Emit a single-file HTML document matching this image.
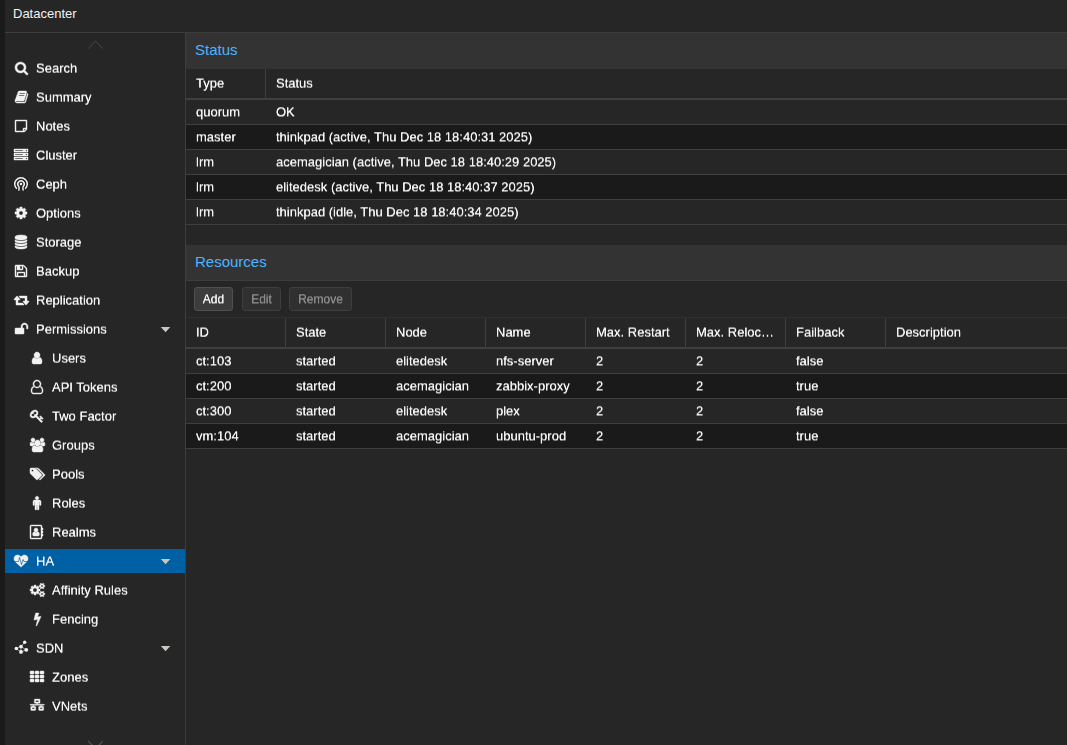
<!DOCTYPE html>
<html><head><meta charset="utf-8"><title>Datacenter</title>
<style>
html,body{margin:0;padding:0}
body{width:1067px;height:745px;overflow:hidden;background:#262626;color:#f2f2f2;font-family:"Liberation Sans",sans-serif;font-size:13px;position:relative}
div,span,svg,i{position:absolute;box-sizing:border-box}
.ic{overflow:visible}
.b0{filter:url(#vb0)}
.b1{filter:url(#vb1)}
#strip{left:0;top:0;width:5px;height:745px;background:#1a1a1a}
#hdr{left:5px;top:0;width:1062px;height:33px;border-bottom:1px solid #3d3d3d}
#hdr span{left:8px;top:0;line-height:27px;white-space:nowrap}
#side{left:0;top:0;width:186px;height:745px}
#sideb{left:185px;top:33px;width:1px;height:712px;background:#3d3d3d}
.lbl{line-height:29px;white-space:nowrap;font-size:13px}
.sel{left:5px;width:180px;height:24px;background:#0060a4}
.arr{left:161px;width:0;height:0;border-left:5px solid transparent;border-right:5px solid transparent;border-top:5px solid #d6cfc4}
.panelhdr{left:186px;width:881px;height:36px;background:#333333}
.panelhdr span{left:9px;top:0;line-height:34px;font-size:15px;color:#4db4ff;white-space:nowrap}
.colhdr{left:186px;width:881px;height:31px;border-bottom:2px solid #3f3f3f;background:#262626}
.colhdr span{top:0;line-height:29px;white-space:nowrap}
.colhdr i{top:0;width:1px;height:29px;background:#3f3f3f}
.grid{left:186px;width:881px}
.row{left:0;width:881px;height:25px;border-bottom:1px solid #3f3f3f}
.row.alt{background:#1a1a1a}
.cell{top:0;line-height:24px;white-space:nowrap}
.tb{left:186px;width:881px;height:36px}
.btn{top:6px;height:24px;border:1px solid #505050;border-radius:3px;background:#3c3c3c;font-size:12px;color:#f2f2f2}
.btn span{left:0;top:0;width:100%;line-height:22px;text-align:center}
.btn.dis{background:#303030;color:#8c8c8c;border-color:#3e3e3e}
</style></head><body>
<svg width="0" height="0" style="position:absolute"><defs>
<filter id="vb0" x="-5%" y="-20%" width="110%" height="140%" color-interpolation-filters="sRGB"><feConvolveMatrix order="1 2" kernelMatrix="0.4 0.6" targetX="0" targetY="0" edgeMode="none" preserveAlpha="false"/><feComponentTransfer><feFuncA type="linear" slope="1.35"/></feComponentTransfer></filter>
<filter id="vb1" x="-5%" y="-20%" width="110%" height="140%" color-interpolation-filters="sRGB"><feConvolveMatrix order="1 2" kernelMatrix="0.6 0.4" targetX="0" targetY="1" edgeMode="none" preserveAlpha="false"/><feComponentTransfer><feFuncA type="linear" slope="1.35"/></feComponentTransfer></filter>
</defs></svg>
<div id="strip"></div>
<div id="hdr"><span>Datacenter</span></div>
<div id="sideb"></div>
<div id="side">
<svg class="ic" style="left:86px;top:38px;width:20px;height:14px" viewBox="86 38 20 14"><path d="M88.2 48.6L95.5 41.1L102.8 48.6" fill="none" stroke="#3d3d3d" stroke-width="1.1"/></svg>
<svg class="ic" style="left:86px;top:738px;width:20px;height:14px" viewBox="86 738 20 14"><path d="M88.2 741.1L95.5 748.6L102.8 741.1" fill="none" stroke="#555555" stroke-width="1.1"/></svg>
<svg class="ic" style="left:14.50px;top:60.50px;width:13.00px;height:14.00px" viewBox="0 -1536 1664 1792"><path fill="#f2f2f2" stroke="#f2f2f2" stroke-width="56" stroke-linejoin="round" transform="scale(1,-1)" d="M1020 388Q1152 519 1152 704Q1152 889 1020 1020Q889 1152 704 1152Q519 1152 388 1020Q256 889 256 704Q256 519 388 388Q519 256 704 256Q889 256 1020 388ZM1664 -128Q1664 -180 1626 -218Q1588 -256 1536 -256Q1482 -256 1446 -218L1103 124Q924 0 704 0Q561 0 430 56Q300 111 206 206Q111 300 56 430Q0 561 0 704Q0 847 56 978Q111 1108 206 1202Q300 1297 430 1352Q561 1408 704 1408Q847 1408 978 1352Q1108 1297 1202 1202Q1297 1108 1352 978Q1408 847 1408 704Q1408 484 1284 305L1627 -38Q1664 -75 1664 -128Z"/></svg><div class="lbl b0" style="left:36px;top:54px">Search</div><svg class="ic" style="left:14.50px;top:89.50px;width:13.00px;height:14.00px" viewBox="0 -1536 1664 1792"><path fill="#f2f2f2" stroke="#f2f2f2" stroke-width="56" stroke-linejoin="round" transform="scale(1,-1)" d="M1639 1058Q1679 1001 1657 929L1382 23Q1363 -41 1306 -84Q1248 -128 1183 -128H260Q183 -128 112 -74Q40 -21 12 57Q-12 124 10 184Q10 188 13 211Q16 234 17 248Q18 256 14 270Q10 283 11 289Q13 300 19 310Q25 320 36 334Q46 347 52 357Q75 395 97 448Q119 502 127 540Q130 550 128 570Q125 590 127 598Q130 609 144 626Q158 643 161 649Q182 685 203 741Q224 797 228 831Q229 840 226 863Q222 886 226 891Q230 904 248 922Q266 939 270 944Q289 970 312 1028Q336 1087 340 1125Q341 1133 337 1150Q333 1168 335 1177Q337 1185 344 1195Q351 1205 362 1218Q373 1231 379 1239Q387 1251 396 1270Q404 1288 410 1304Q417 1321 426 1340Q436 1360 446 1372Q456 1385 472 1396Q489 1407 508 1408Q528 1408 556 1402L555 1399Q593 1408 606 1408H1367Q1441 1408 1481 1352Q1521 1296 1499 1222L1225 316Q1189 197 1154 162Q1118 128 1025 128H156Q129 128 118 113Q107 97 117 70Q141 0 261 0H1184Q1213 0 1240 16Q1267 31 1275 57L1575 1044Q1582 1066 1580 1101Q1618 1086 1639 1058ZM575 1056Q571 1043 577 1034Q583 1024 597 1024H1205Q1218 1024 1230 1034Q1243 1043 1247 1056L1268 1120Q1272 1133 1266 1142Q1260 1152 1246 1152H638Q625 1152 612 1142Q600 1133 596 1120ZM492 800Q488 787 494 778Q500 768 514 768H1122Q1135 768 1148 778Q1160 787 1164 800L1185 864Q1189 877 1183 886Q1177 896 1163 896H555Q542 896 530 886Q517 877 513 864Z"/></svg><div class="lbl b0" style="left:36px;top:83px">Summary</div><svg class="ic" style="left:15.00px;top:118.50px;width:12.00px;height:14.00px" viewBox="0 -1536 1536 1792"><path fill="#f2f2f2" stroke="#f2f2f2" stroke-width="56" stroke-linejoin="round" transform="scale(1,-1)" d="M1400 256H1152V8Q1181 18 1193 30L1378 215Q1390 227 1400 256ZM1120 384H1408V1280H128V0H1024V288Q1024 328 1052 356Q1080 384 1120 384ZM1536 1312V288Q1536 248 1516 200Q1496 152 1468 124L1284 -60Q1256 -88 1208 -108Q1160 -128 1120 -128H96Q56 -128 28 -100Q0 -72 0 -32V1312Q0 1352 28 1380Q56 1408 96 1408H1440Q1480 1408 1508 1380Q1536 1352 1536 1312Z"/></svg><div class="lbl b0" style="left:36px;top:112px">Notes</div><svg class="ic" style="left:14.00px;top:147.50px;width:14.00px;height:14.00px" viewBox="0 -1536 1792 1792"><path fill="#f2f2f2" stroke="#f2f2f2" stroke-width="56" stroke-linejoin="round" transform="scale(1,-1)" d="M128 128H1152V256H128ZM128 640H1152V768H128ZM1668 124Q1696 152 1696 192Q1696 232 1668 260Q1640 288 1600 288Q1560 288 1532 260Q1504 232 1504 192Q1504 152 1532 124Q1560 96 1600 96Q1640 96 1668 124ZM128 1152H1152V1280H128ZM1668 636Q1696 664 1696 704Q1696 744 1668 772Q1640 800 1600 800Q1560 800 1532 772Q1504 744 1504 704Q1504 664 1532 636Q1560 608 1600 608Q1640 608 1668 636ZM1668 1148Q1696 1176 1696 1216Q1696 1256 1668 1284Q1640 1312 1600 1312Q1560 1312 1532 1284Q1504 1256 1504 1216Q1504 1176 1532 1148Q1560 1120 1600 1120Q1640 1120 1668 1148ZM1792 384V0H0V384ZM1792 896V512H0V896ZM1792 1408V1024H0V1408Z"/></svg><div class="lbl b0" style="left:36px;top:141px">Cluster</div><svg class="ic" style="left:11.899999999999999px;top:174.9px;width:18px;height:18px" viewBox="-9 -9 18 18" fill="none" stroke="#f2f2f2" stroke-width="1.45" stroke-linecap="butt"><circle cx="0" cy="0.1" r="1.25" fill="#f2f2f2" stroke="none"/><path d="M-4.2 4.7A6.3 6.3 0 1 1 4.2 4.7"/><path d="M-2.3 6.6L-1.9 4.6Q-1.7 3.4 -2.4 2.2A3.2 3.2 0 1 1 2.4 2.2Q1.7 3.4 1.9 4.6L2.3 6.6"/></svg><div class="lbl b0" style="left:36px;top:170px">Ceph</div><svg class="ic" style="left:15.00px;top:205.50px;width:12.00px;height:14.00px" viewBox="0 -1536 1536 1792"><path fill="#f2f2f2" stroke="#f2f2f2" stroke-width="56" stroke-linejoin="round" transform="scale(1,-1)" d="M949 459Q1024 534 1024 640Q1024 746 949 821Q874 896 768 896Q662 896 587 821Q512 746 512 640Q512 534 587 459Q662 384 768 384Q874 384 949 459ZM1536 749V527Q1536 515 1528 504Q1520 493 1508 491L1323 463Q1304 409 1284 372Q1319 322 1391 234Q1401 222 1401 209Q1401 196 1392 186Q1365 149 1293 78Q1221 7 1199 7Q1187 7 1173 16L1035 124Q991 101 944 86Q928 -50 915 -100Q908 -128 879 -128H657Q643 -128 632 -120Q622 -111 621 -98L593 86Q544 102 503 123L362 16Q352 7 337 7Q323 7 312 18Q186 132 147 186Q140 196 140 209Q140 221 148 232Q163 253 199 298Q235 344 253 369Q226 419 212 468L29 495Q16 497 8 508Q0 518 0 531V753Q0 765 8 776Q16 787 27 789L213 817Q227 863 252 909Q212 966 145 1047Q135 1059 135 1071Q135 1081 144 1094Q170 1130 242 1202Q315 1273 337 1273Q350 1273 363 1263L501 1156Q545 1179 592 1194Q608 1330 621 1380Q628 1408 657 1408H879Q893 1408 904 1400Q914 1391 915 1378L943 1194Q992 1178 1033 1157L1175 1264Q1184 1273 1199 1273Q1212 1273 1224 1263Q1353 1144 1389 1093Q1396 1085 1396 1071Q1396 1059 1388 1048Q1373 1027 1337 982Q1301 936 1283 911Q1309 861 1324 813L1507 785Q1520 783 1528 772Q1536 762 1536 749Z"/></svg><div class="lbl b0" style="left:36px;top:199px">Options</div><svg class="ic" style="left:15.00px;top:234.50px;width:12.00px;height:14.00px" viewBox="0 -1536 1536 1792"><path fill="#f2f2f2" stroke="#f2f2f2" stroke-width="56" stroke-linejoin="round" transform="scale(1,-1)" d="M1536 938V768Q1536 699 1433 640Q1330 581 1153 546Q976 512 768 512Q560 512 383 546Q206 581 103 640Q0 699 0 768V938Q119 854 325 811Q531 768 768 768Q1005 768 1211 811Q1417 854 1536 938ZM1536 170V0Q1536 -69 1433 -128Q1330 -187 1153 -222Q976 -256 768 -256Q560 -256 383 -222Q206 -187 103 -128Q0 -69 0 0V170Q119 86 325 43Q531 0 768 0Q1005 0 1211 43Q1417 86 1536 170ZM1536 554V384Q1536 315 1433 256Q1330 197 1153 162Q976 128 768 128Q560 128 383 162Q206 197 103 256Q0 315 0 384V554Q119 470 325 427Q531 384 768 384Q1005 384 1211 427Q1417 470 1536 554ZM1536 1280V1152Q1536 1083 1433 1024Q1330 965 1153 930Q976 896 768 896Q560 896 383 930Q206 965 103 1024Q0 1083 0 1152V1280Q0 1349 103 1408Q206 1467 383 1502Q560 1536 768 1536Q976 1536 1153 1502Q1330 1467 1433 1408Q1536 1349 1536 1280Z"/></svg><div class="lbl b0" style="left:36px;top:228px">Storage</div><svg class="ic" style="left:15.00px;top:263.50px;width:12.00px;height:14.00px" viewBox="0 -1536 1536 1792"><path fill="#f2f2f2" stroke="#f2f2f2" stroke-width="56" stroke-linejoin="round" transform="scale(1,-1)" d="M384 0H1152V384H384ZM1280 0H1408V896Q1408 910 1398 934Q1388 959 1378 969L1097 1250Q1087 1260 1063 1270Q1039 1280 1024 1280V864Q1024 824 996 796Q968 768 928 768H352Q312 768 284 796Q256 824 256 864V1280H128V0H256V416Q256 456 284 484Q312 512 352 512H1184Q1224 512 1252 484Q1280 456 1280 416ZM896 928V1248Q896 1261 886 1270Q877 1280 864 1280H672Q659 1280 650 1270Q640 1261 640 1248V928Q640 915 650 906Q659 896 672 896H864Q877 896 886 906Q896 915 896 928ZM1536 896V-32Q1536 -72 1508 -100Q1480 -128 1440 -128H96Q56 -128 28 -100Q0 -72 0 -32V1312Q0 1352 28 1380Q56 1408 96 1408H1024Q1064 1408 1112 1388Q1160 1368 1188 1340L1468 1060Q1496 1032 1516 984Q1536 936 1536 896Z"/></svg><div class="lbl b0" style="left:36px;top:257px">Backup</div><svg class="ic" style="left:13.50px;top:292.50px;width:15.00px;height:14.00px" viewBox="0 -1536 1920 1792"><path fill="#f2f2f2" stroke="#f2f2f2" stroke-width="56" stroke-linejoin="round" transform="scale(1,-1)" d="M1280 32Q1280 19 1270 10Q1261 0 1248 0H288Q280 0 274 2Q269 4 266 9Q262 14 260 17Q258 20 257 28Q256 37 256 40Q256 43 256 53Q256 63 256 64V224V640H64Q38 640 19 659Q0 678 0 704Q0 728 15 745L335 1129Q354 1151 384 1151Q414 1151 433 1129L753 745Q768 728 768 704Q768 678 749 659Q730 640 704 640H512V256H1088Q1104 256 1113 245L1273 53Q1280 43 1280 32ZM1920 448Q1920 424 1905 407L1585 23Q1565 0 1536 0Q1507 0 1487 23L1167 407Q1152 424 1152 448Q1152 474 1171 493Q1190 512 1216 512H1408V896H832Q816 896 807 908L647 1100Q640 1109 640 1120Q640 1133 650 1142Q659 1152 672 1152H1632Q1640 1152 1646 1150Q1651 1148 1654 1143Q1658 1138 1660 1135Q1662 1132 1663 1124Q1664 1115 1664 1112Q1664 1109 1664 1099Q1664 1089 1664 1088V928V512H1856Q1882 512 1901 493Q1920 474 1920 448Z"/></svg><div class="lbl b0" style="left:36px;top:286px">Replication</div><svg class="ic" style="left:14.50px;top:321.50px;width:13.00px;height:14.00px" viewBox="0 -1536 1664 1792"><path fill="#f2f2f2" stroke="#f2f2f2" stroke-width="56" stroke-linejoin="round" transform="scale(1,-1)" d="M1664 960V704Q1664 678 1645 659Q1626 640 1600 640H1536Q1510 640 1491 659Q1472 678 1472 704V960Q1472 1066 1397 1141Q1322 1216 1216 1216Q1110 1216 1035 1141Q960 1066 960 960V768H1056Q1096 768 1124 740Q1152 712 1152 672V96Q1152 56 1124 28Q1096 0 1056 0H96Q56 0 28 28Q0 56 0 96V672Q0 712 28 740Q56 768 96 768H768V960Q768 1145 900 1276Q1031 1408 1216 1408Q1401 1408 1532 1276Q1664 1145 1664 960Z"/></svg><div class="lbl b0" style="left:36px;top:315px">Permissions</div><svg class="ic" style="left:160px;top:326px;width:12px;height:8px" viewBox="160 -1 12 8"><path d="M160.8 0H170.3L165.55 5.2Z" fill="#cbc6be"/></svg><svg class="ic" style="left:32.00px;top:350.50px;width:10.00px;height:14.00px" viewBox="0 -1536 1280 1792"><path fill="#f2f2f2" stroke="#f2f2f2" stroke-width="56" stroke-linejoin="round" transform="scale(1,-1)" d="M1280 137Q1280 28 1218 -50Q1155 -128 1067 -128H213Q125 -128 62 -50Q0 28 0 137Q0 222 8 298Q17 373 40 450Q63 526 98 580Q134 635 192 670Q251 704 327 704Q458 576 640 576Q822 576 953 704Q1029 704 1088 670Q1146 635 1182 580Q1217 526 1240 450Q1263 373 1272 298Q1280 222 1280 137ZM912 1296Q1024 1183 1024 1024Q1024 865 912 752Q799 640 640 640Q481 640 368 752Q256 865 256 1024Q256 1183 368 1296Q481 1408 640 1408Q799 1408 912 1296Z"/></svg><div class="lbl b0" style="left:52px;top:344px">Users</div><svg class="ic" style="left:31.00px;top:379.50px;width:12.00px;height:14.00px" viewBox="0 -1536 1536 1792"><path fill="#f2f2f2" stroke="#f2f2f2" stroke-width="56" stroke-linejoin="round" transform="scale(1,-1)" d="M1201 752Q1248 738 1290 714Q1333 690 1380 641Q1426 592 1459 526Q1492 459 1514 354Q1536 248 1536 117Q1536 -37 1436 -146Q1336 -256 1195 -256H341Q200 -256 100 -146Q0 -37 0 117Q0 248 22 354Q44 459 77 526Q110 592 156 641Q203 690 246 714Q288 738 335 752Q256 877 256 1024Q256 1128 296 1222Q337 1317 406 1386Q475 1455 570 1496Q664 1536 768 1536Q872 1536 966 1496Q1061 1455 1130 1386Q1199 1317 1240 1222Q1280 1128 1280 1024Q1280 877 1201 752ZM1040 1296Q927 1408 768 1408Q609 1408 496 1296Q384 1183 384 1024Q384 865 496 752Q609 640 768 640Q927 640 1040 752Q1152 865 1152 1024Q1152 1183 1040 1296ZM1195 -128Q1283 -128 1346 -56Q1408 15 1408 117Q1408 356 1330 494Q1251 632 1104 639Q959 512 768 512Q577 512 432 639Q285 632 206 494Q128 356 128 117Q128 15 190 -56Q253 -128 341 -128Z"/></svg><div class="lbl b0" style="left:52px;top:373px">API Tokens</div><svg class="ic" style="left:30.00px;top:408.50px;width:14.00px;height:14.00px" viewBox="0 -1536 1792 1792"><path fill="#f2f2f2" stroke="#f2f2f2" stroke-width="56" stroke-linejoin="round" transform="scale(1,-1)" d="M448 1024Q448 982 467 941Q426 960 384 960Q304 960 248 904Q192 848 192 768Q192 688 248 632Q304 576 384 576Q464 576 520 632Q576 688 576 768Q576 810 557 851Q598 832 640 832Q720 832 776 888Q832 944 832 1024Q832 1104 776 1160Q720 1216 640 1216Q560 1216 504 1160Q448 1104 448 1024ZM1683 320Q1683 303 1634 254Q1585 205 1568 205Q1559 205 1540 221Q1520 237 1503 254Q1486 271 1464 294Q1443 317 1440 320L1344 224L1564 4Q1592 -24 1592 -64Q1592 -106 1553 -145Q1514 -184 1472 -184Q1432 -184 1404 -156L733 515Q557 384 368 384Q205 384 102 486Q0 589 0 752Q0 912 95 1065Q190 1218 343 1313Q496 1408 656 1408Q819 1408 922 1306Q1024 1203 1024 1040Q1024 851 893 675L1248 320L1344 416Q1341 419 1318 440Q1295 462 1278 479Q1261 496 1245 516Q1229 535 1229 544Q1229 561 1278 610Q1327 659 1344 659Q1357 659 1367 649Q1373 643 1413 604Q1453 566 1495 525Q1537 484 1582 439Q1626 394 1654 361Q1683 328 1683 320Z"/></svg><div class="lbl b0" style="left:52px;top:402px">Two Factor</div><svg class="ic" style="left:29.50px;top:437.50px;width:15.00px;height:14.00px" viewBox="0 -1536 1920 1792"><path fill="#f2f2f2" stroke="#f2f2f2" stroke-width="56" stroke-linejoin="round" transform="scale(1,-1)" d="M593 640Q431 635 328 512H194Q112 512 56 552Q0 593 0 671Q0 1024 124 1024Q130 1024 168 1003Q205 982 265 960Q325 939 384 939Q451 939 517 962Q512 925 512 896Q512 757 593 640ZM1664 3Q1664 -117 1591 -186Q1518 -256 1397 -256H523Q402 -256 329 -186Q256 -117 256 3Q256 56 260 106Q263 157 274 216Q284 274 300 324Q316 374 343 422Q370 469 405 502Q440 536 490 556Q541 576 602 576Q612 576 645 554Q678 533 718 506Q758 480 825 458Q892 437 960 437Q1028 437 1095 458Q1162 480 1202 506Q1242 533 1275 554Q1308 576 1318 576Q1379 576 1430 556Q1480 536 1515 502Q1550 469 1577 422Q1604 374 1620 324Q1636 274 1646 216Q1657 157 1660 106Q1664 56 1664 3ZM565 1461Q640 1386 640 1280Q640 1174 565 1099Q490 1024 384 1024Q278 1024 203 1099Q128 1174 128 1280Q128 1386 203 1461Q278 1536 384 1536Q490 1536 565 1461ZM1232 1168Q1344 1055 1344 896Q1344 737 1232 624Q1119 512 960 512Q801 512 688 624Q576 737 576 896Q576 1055 688 1168Q801 1280 960 1280Q1119 1280 1232 1168ZM1920 671Q1920 593 1864 552Q1808 512 1726 512H1592Q1489 635 1327 640Q1408 757 1408 896Q1408 925 1403 962Q1469 939 1536 939Q1595 939 1655 960Q1715 982 1752 1003Q1790 1024 1796 1024Q1920 1024 1920 671ZM1717 1461Q1792 1386 1792 1280Q1792 1174 1717 1099Q1642 1024 1536 1024Q1430 1024 1355 1099Q1280 1174 1280 1280Q1280 1386 1355 1461Q1430 1536 1536 1536Q1642 1536 1717 1461Z"/></svg><div class="lbl b0" style="left:52px;top:431px">Groups</div><svg class="ic" style="left:29.50px;top:466.50px;width:15.00px;height:14.00px" viewBox="0 -1536 1920 1792"><path fill="#f2f2f2" stroke="#f2f2f2" stroke-width="56" stroke-linejoin="round" transform="scale(1,-1)" d="M410 998Q448 1035 448 1088Q448 1141 410 1178Q373 1216 320 1216Q267 1216 230 1178Q192 1141 192 1088Q192 1035 230 998Q267 960 320 960Q373 960 410 998ZM1515 512Q1515 459 1478 422L987 -70Q948 -107 896 -107Q843 -107 806 -70L91 646Q53 683 26 747Q0 811 0 864V1280Q0 1332 38 1370Q76 1408 128 1408H544Q597 1408 661 1382Q725 1355 763 1317L1478 603Q1515 564 1515 512ZM1899 512Q1899 459 1862 422L1371 -70Q1332 -107 1280 -107Q1244 -107 1221 -93Q1198 -79 1168 -48L1638 422Q1675 459 1675 512Q1675 564 1638 603L923 1317Q885 1355 821 1382Q757 1408 704 1408H928Q981 1408 1045 1382Q1109 1355 1147 1317L1862 603Q1899 564 1899 512Z"/></svg><div class="lbl b0" style="left:52px;top:460px">Pools</div><svg class="ic" style="left:33.00px;top:495.50px;width:8.00px;height:14.00px" viewBox="0 -1536 1024 1792"><path fill="#f2f2f2" stroke="#f2f2f2" stroke-width="56" stroke-linejoin="round" transform="scale(1,-1)" d="M1024 832V416Q1024 376 996 348Q968 320 928 320Q888 320 860 348Q832 376 832 416V768H768V-144Q768 -190 735 -223Q702 -256 656 -256Q610 -256 577 -223Q544 -190 544 -144V320H480V-144Q480 -190 447 -223Q414 -256 368 -256Q322 -256 289 -223Q256 -190 256 -144V768H192V416Q192 376 164 348Q136 320 96 320Q56 320 28 348Q0 376 0 416V832Q0 912 56 968Q112 1024 192 1024H832Q912 1024 968 968Q1024 912 1024 832ZM670 1438Q736 1373 736 1280Q736 1187 670 1122Q605 1056 512 1056Q419 1056 354 1122Q288 1187 288 1280Q288 1373 354 1438Q419 1504 512 1504Q605 1504 670 1438Z"/></svg><div class="lbl b0" style="left:52px;top:489px">Roles</div><svg class="ic" style="left:29.90px;top:524.50px;width:13.00px;height:14.00px" viewBox="0 -1536 1664 1792"><path fill="#f2f2f2" stroke="#f2f2f2" stroke-width="56" stroke-linejoin="round" transform="scale(1,-1)" d="M1028 892Q1028 785 952 709Q875 633 768 633Q661 633 584 709Q508 785 508 892Q508 1000 584 1076Q661 1152 768 1152Q875 1152 952 1076Q1028 1000 1028 892ZM980 672Q1026 672 1062 655Q1099 638 1122 608Q1146 577 1162 540Q1178 504 1186 460Q1194 415 1198 377Q1201 339 1201 298Q1201 231 1162 180Q1122 128 1056 128H480Q414 128 374 180Q335 231 335 298Q335 346 340 392Q344 437 358 490Q372 543 394 582Q417 620 458 646Q498 672 551 672H556Q563 668 588 652Q613 637 624 632Q634 626 656 614Q679 603 694 598Q708 594 728 590Q749 585 768 585Q787 585 808 590Q828 594 842 598Q857 603 880 614Q902 626 912 632Q923 637 948 652Q973 668 980 672ZM1664 928Q1664 915 1654 906Q1645 896 1632 896H1536V768H1632Q1645 768 1654 758Q1664 749 1664 736V544Q1664 531 1654 522Q1645 512 1632 512H1536V384H1632Q1645 384 1654 374Q1664 365 1664 352V160Q1664 147 1654 138Q1645 128 1632 128H1536V-96Q1536 -162 1489 -209Q1442 -256 1376 -256H160Q94 -256 47 -209Q0 -162 0 -96V1376Q0 1442 47 1489Q94 1536 160 1536H1376Q1442 1536 1489 1489Q1536 1442 1536 1376V1152H1632Q1645 1152 1654 1142Q1664 1133 1664 1120ZM1408 -96V1376Q1408 1389 1398 1398Q1389 1408 1376 1408H160Q147 1408 138 1398Q128 1389 128 1376V-96Q128 -109 138 -118Q147 -128 160 -128H1376Q1389 -128 1398 -118Q1408 -109 1408 -96Z"/></svg><div class="lbl b0" style="left:52px;top:518px">Realms</div><div class="sel" style="top:549px"></div><svg class="ic" style="left:14.00px;top:553.50px;width:14.00px;height:14.00px" viewBox="0 -1536 1792 1792"><path fill="#f2f2f2" stroke="#f2f2f2" stroke-width="56" stroke-linejoin="round" transform="scale(1,-1)" d="M1280 512H1585Q1580 506 1575 502Q1570 497 1566 494L1563 490L940 -110Q922 -128 896 -128Q870 -128 852 -110L228 492Q223 494 207 512H576Q598 512 616 526Q633 539 638 560L708 841L898 174Q904 154 921 141Q938 128 960 128Q981 128 998 141Q1015 154 1021 174L1167 659L1223 547Q1241 512 1280 512ZM1792 940Q1792 795 1689 640H1320L1209 861Q1201 878 1184 888Q1166 898 1147 896Q1102 891 1091 850L962 420L766 1106Q760 1126 742 1139Q725 1152 703 1152Q681 1152 664 1138Q647 1125 642 1104L526 640H103Q0 795 0 940Q0 1160 127 1284Q254 1408 478 1408Q540 1408 604 1386Q669 1365 724 1328Q780 1292 820 1260Q860 1228 896 1192Q932 1228 972 1260Q1012 1292 1068 1328Q1123 1365 1188 1386Q1252 1408 1314 1408Q1538 1408 1665 1284Q1792 1160 1792 940Z"/></svg><div class="lbl b0" style="left:36px;top:547px">HA</div><svg class="ic" style="left:160px;top:558px;width:12px;height:8px" viewBox="160 -1 12 8"><path d="M160.8 0H170.3L165.55 5.2Z" fill="#cbc6be"/></svg><svg class="ic" style="left:29.50px;top:582.50px;width:15.00px;height:14.00px" viewBox="0 -1536 1920 1792"><path fill="#f2f2f2" stroke="#f2f2f2" stroke-width="56" stroke-linejoin="round" transform="scale(1,-1)" d="M821 459Q896 534 896 640Q896 746 821 821Q746 896 640 896Q534 896 459 821Q384 746 384 640Q384 534 459 459Q534 384 640 384Q746 384 821 459ZM1664 128Q1664 180 1626 218Q1588 256 1536 256Q1484 256 1446 218Q1408 180 1408 128Q1408 75 1446 38Q1483 0 1536 0Q1589 0 1626 38Q1664 75 1664 128ZM1664 1152Q1664 1204 1626 1242Q1588 1280 1536 1280Q1484 1280 1446 1242Q1408 1204 1408 1152Q1408 1099 1446 1062Q1483 1024 1536 1024Q1589 1024 1626 1062Q1664 1099 1664 1152ZM1280 731V546Q1280 536 1273 526Q1266 517 1257 516L1102 492Q1091 457 1070 416Q1104 368 1160 301Q1167 290 1167 281Q1167 269 1160 262Q1137 232 1078 172Q1018 113 999 113Q988 113 978 120L863 210Q826 191 786 179Q775 71 763 24Q756 0 733 0H547Q536 0 527 8Q518 15 517 25L494 178Q460 188 419 209L301 120Q294 113 281 113Q270 113 260 121Q116 254 116 281Q116 290 123 300Q133 314 164 353Q195 392 211 414Q188 458 176 496L24 520Q14 521 7 530Q0 538 0 549V734Q0 744 7 754Q14 763 23 764L178 788Q189 823 210 864Q176 912 120 979Q113 990 113 999Q113 1011 120 1019Q142 1049 202 1108Q262 1167 281 1167Q292 1167 302 1160L417 1070Q451 1088 494 1102Q505 1210 517 1256Q524 1280 547 1280H733Q744 1280 753 1272Q762 1265 763 1255L786 1102Q820 1092 861 1071L979 1160Q987 1167 999 1167Q1010 1167 1020 1159Q1164 1026 1164 999Q1164 991 1157 980Q1145 964 1115 926Q1085 888 1070 866Q1093 818 1104 784L1256 761Q1266 759 1273 750Q1280 742 1280 731ZM1920 198V58Q1920 42 1771 27Q1759 0 1741 -25Q1792 -138 1792 -163Q1792 -167 1788 -170Q1666 -241 1664 -241Q1656 -241 1618 -194Q1580 -147 1566 -126Q1546 -128 1536 -128Q1526 -128 1506 -126Q1492 -147 1454 -194Q1416 -241 1408 -241Q1406 -241 1284 -170Q1280 -167 1280 -163Q1280 -138 1331 -25Q1313 0 1301 27Q1152 42 1152 58V198Q1152 214 1301 229Q1314 258 1331 281Q1280 394 1280 419Q1280 423 1284 426Q1288 428 1319 446Q1350 464 1378 480Q1406 496 1408 496Q1416 496 1454 450Q1492 403 1506 382Q1526 384 1536 384Q1546 384 1566 382Q1617 453 1658 494L1664 496Q1668 496 1788 426Q1792 423 1792 419Q1792 394 1741 281Q1758 258 1771 229Q1920 214 1920 198ZM1920 1222V1082Q1920 1066 1771 1051Q1759 1024 1741 999Q1792 886 1792 861Q1792 857 1788 854Q1666 783 1664 783Q1656 783 1618 830Q1580 877 1566 898Q1546 896 1536 896Q1526 896 1506 898Q1492 877 1454 830Q1416 783 1408 783Q1406 783 1284 854Q1280 857 1280 861Q1280 886 1331 999Q1313 1024 1301 1051Q1152 1066 1152 1082V1222Q1152 1238 1301 1253Q1314 1282 1331 1305Q1280 1418 1280 1443Q1280 1447 1284 1450Q1288 1452 1319 1470Q1350 1488 1378 1504Q1406 1520 1408 1520Q1416 1520 1454 1474Q1492 1427 1506 1406Q1526 1408 1536 1408Q1546 1408 1566 1406Q1617 1477 1658 1518L1664 1520Q1668 1520 1788 1450Q1792 1447 1792 1443Q1792 1418 1741 1305Q1758 1282 1771 1253Q1920 1238 1920 1222Z"/></svg><div class="lbl b0" style="left:52px;top:576px">Affinity Rules</div><svg class="ic" style="left:33.50px;top:611.50px;width:7.00px;height:14.00px" viewBox="0 -1536 896 1792"><path fill="#f2f2f2" stroke="#f2f2f2" stroke-width="56" stroke-linejoin="round" transform="scale(1,-1)" d="M885 970Q903 950 892 926L352 -231Q339 -256 310 -256Q306 -256 296 -254Q279 -249 270 -235Q262 -221 266 -205L463 603L57 502Q53 501 45 501Q27 501 14 512Q-4 527 1 551L202 1376Q206 1390 218 1399Q230 1408 246 1408H574Q593 1408 606 1396Q619 1383 619 1366Q619 1358 614 1348L443 885L839 983Q847 985 851 985Q870 985 885 970Z"/></svg><div class="lbl b0" style="left:52px;top:605px">Fencing</div><svg class="ic" style="left:11.7px;top:637.6px;width:18px;height:18px" viewBox="-9 -9 18 18" fill="#f2f2f2" stroke="#f2f2f2" stroke-width="0.6"><circle cx="0" cy="-0.4" r="1.8" stroke="none"/><circle cx="-4.7" cy="1.6" r="1.75" stroke="none"/><circle cx="3.7" cy="-4.7" r="1.7" stroke="none"/><circle cx="5.3" cy="2.8" r="1.9" stroke="none"/><circle cx="0" cy="4.9" r="1.9" stroke="none"/><path d="M0 -0.4L3.7 -4.7M0 -0.4L-4.7 1.6M0 -0.4L5.3 2.8M0 -0.4L0 4.9M-4.7 1.6L0 4.9L5.3 2.8" fill="none"/></svg><div class="lbl b0" style="left:36px;top:634px">SDN</div><svg class="ic" style="left:160px;top:645px;width:12px;height:8px" viewBox="160 -1 12 8"><path d="M160.8 0H170.3L165.55 5.2Z" fill="#cbc6be"/></svg><svg class="ic" style="left:30.00px;top:669.50px;width:14.00px;height:14.00px" viewBox="0 -1536 1792 1792"><path fill="#f2f2f2" stroke="#f2f2f2" stroke-width="56" stroke-linejoin="round" transform="scale(1,-1)" d="M512 288V96Q512 56 484 28Q456 0 416 0H96Q56 0 28 28Q0 56 0 96V288Q0 328 28 356Q56 384 96 384H416Q456 384 484 356Q512 328 512 288ZM512 800V608Q512 568 484 540Q456 512 416 512H96Q56 512 28 540Q0 568 0 608V800Q0 840 28 868Q56 896 96 896H416Q456 896 484 868Q512 840 512 800ZM1152 288V96Q1152 56 1124 28Q1096 0 1056 0H736Q696 0 668 28Q640 56 640 96V288Q640 328 668 356Q696 384 736 384H1056Q1096 384 1124 356Q1152 328 1152 288ZM512 1312V1120Q512 1080 484 1052Q456 1024 416 1024H96Q56 1024 28 1052Q0 1080 0 1120V1312Q0 1352 28 1380Q56 1408 96 1408H416Q456 1408 484 1380Q512 1352 512 1312ZM1152 800V608Q1152 568 1124 540Q1096 512 1056 512H736Q696 512 668 540Q640 568 640 608V800Q640 840 668 868Q696 896 736 896H1056Q1096 896 1124 868Q1152 840 1152 800ZM1792 288V96Q1792 56 1764 28Q1736 0 1696 0H1376Q1336 0 1308 28Q1280 56 1280 96V288Q1280 328 1308 356Q1336 384 1376 384H1696Q1736 384 1764 356Q1792 328 1792 288ZM1152 1312V1120Q1152 1080 1124 1052Q1096 1024 1056 1024H736Q696 1024 668 1052Q640 1080 640 1120V1312Q640 1352 668 1380Q696 1408 736 1408H1056Q1096 1408 1124 1380Q1152 1352 1152 1312ZM1792 800V608Q1792 568 1764 540Q1736 512 1696 512H1376Q1336 512 1308 540Q1280 568 1280 608V800Q1280 840 1308 868Q1336 896 1376 896H1696Q1736 896 1764 868Q1792 840 1792 800ZM1792 1312V1120Q1792 1080 1764 1052Q1736 1024 1696 1024H1376Q1336 1024 1308 1052Q1280 1080 1280 1120V1312Q1280 1352 1308 1380Q1336 1408 1376 1408H1696Q1736 1408 1764 1380Q1792 1352 1792 1312Z"/></svg><div class="lbl b0" style="left:52px;top:663px">Zones</div><svg class="ic" style="left:29.8px;top:698.9px;width:14.4px;height:11.52px" viewBox="0 0 640 512"><path fill="#f2f2f2" stroke="#f2f2f2" stroke-width="14" d="M640 264v-16c0-8.84-7.16-16-16-16H344v-40h72c17.67 0 32-14.33 32-32V32c0-17.67-14.33-32-32-32H224c-17.670 0-32 14.330-32 32v128c0 17.670 14.330 32 32 32h72v40H16c-8.840 0-16 7.160-16 16v16c0 8.840 7.160 16 16 16h104v40H64c-17.670 0-32 14.330-32 32v128c0 17.670 14.330 32 32 32h160c17.670 0 32-14.330 32-32V352c0-17.670-14.330-32-32-32h-56v-40h304v40h-56c-17.670 0-32 14.330-32 32v128c0 17.670 14.330 32 32 32h160c17.670 0 32-14.330 32-32V352c0-17.670-14.330-32-32-32h-56v-40h104c8.840 0 16-7.160 16-16zM256 128V64h128v64H256zm-64 320H96v-64h96v64zm352 0h-96v-64h96v64z"/></svg><div class="lbl b0" style="left:52px;top:692px">VNets</div>
</div>

<div class="panelhdr" style="top:33px"><span>Status</span></div>
<div class="colhdr" style="top:69px"><span class="b0" style="left:10px">Type</span><i style="left:79px"></i><span class="b0" style="left:90px">Status</span></div>
<div class="grid" style="top:100px;height:125px"><div class="row" style="top:0px"><span class="cell b1" style="left:10px">quorum</span><span class="cell b1" style="left:90px">OK</span></div><div class="row alt" style="top:25px"><span class="cell b1" style="left:10px">master</span><span class="cell b1" style="left:90px">thinkpad (active, Thu Dec 18 18:40:31 2025)</span></div><div class="row" style="top:50px"><span class="cell b1" style="left:10px">lrm</span><span class="cell b1" style="left:90px">acemagician (active, Thu Dec 18 18:40:29 2025)</span></div><div class="row alt" style="top:75px"><span class="cell b1" style="left:10px">lrm</span><span class="cell b1" style="left:90px">elitedesk (active, Thu Dec 18 18:40:37 2025)</span></div><div class="row" style="top:100px"><span class="cell b1" style="left:10px">lrm</span><span class="cell b1" style="left:90px">thinkpad (idle, Thu Dec 18 18:40:34 2025)</span></div></div>

<div class="panelhdr" style="top:245px;border-bottom:1px solid #3c3c3c"><span>Resources</span></div>
<div class="tb" style="top:281px">
<div class="btn" style="left:8px;width:39px"><span class="b1">Add</span></div>
<div class="btn dis" style="left:56px;width:39px"><span class="b1">Edit</span></div>
<div class="btn dis" style="left:103px;width:63px"><span class="b1">Remove</span></div>
</div>
<div class="colhdr" style="top:317px;height:32px;border-top:1px solid #303030"><span class="b0" style="left:10px;width:80px;overflow:hidden;text-overflow:ellipsis">ID</span><i style="left:99px"></i><span class="b0" style="left:110px;width:80px;overflow:hidden;text-overflow:ellipsis">State</span><i style="left:199px"></i><span class="b0" style="left:210px;width:80px;overflow:hidden;text-overflow:ellipsis">Node</span><i style="left:299px"></i><span class="b0" style="left:310px;width:80px;overflow:hidden;text-overflow:ellipsis">Name</span><i style="left:399px"></i><span class="b0" style="left:410px;width:80px;overflow:hidden;text-overflow:ellipsis">Max. Restart</span><i style="left:499px"></i><span class="b0" style="left:510px;width:80px;overflow:hidden;text-overflow:ellipsis">Max. Relocate</span><i style="left:599px"></i><span class="b0" style="left:610px;width:80px;overflow:hidden;text-overflow:ellipsis">Failback</span><i style="left:699px"></i><span class="b0" style="left:710px;width:80px;overflow:hidden;text-overflow:ellipsis">Description</span></div>
<div class="grid" style="top:349px;height:100px"><div class="row" style="top:0px"><span class="cell b1" style="left:10px">ct:103</span><span class="cell b1" style="left:110px">started</span><span class="cell b1" style="left:210px">elitedesk</span><span class="cell b1" style="left:310px">nfs-server</span><span class="cell b1" style="left:410px">2</span><span class="cell b1" style="left:510px">2</span><span class="cell b1" style="left:610px">false</span></div><div class="row alt" style="top:25px"><span class="cell b1" style="left:10px">ct:200</span><span class="cell b1" style="left:110px">started</span><span class="cell b1" style="left:210px">acemagician</span><span class="cell b1" style="left:310px">zabbix-proxy</span><span class="cell b1" style="left:410px">2</span><span class="cell b1" style="left:510px">2</span><span class="cell b1" style="left:610px">true</span></div><div class="row" style="top:50px"><span class="cell b1" style="left:10px">ct:300</span><span class="cell b1" style="left:110px">started</span><span class="cell b1" style="left:210px">elitedesk</span><span class="cell b1" style="left:310px">plex</span><span class="cell b1" style="left:410px">2</span><span class="cell b1" style="left:510px">2</span><span class="cell b1" style="left:610px">false</span></div><div class="row alt" style="top:75px"><span class="cell b1" style="left:10px">vm:104</span><span class="cell b1" style="left:110px">started</span><span class="cell b1" style="left:210px">acemagician</span><span class="cell b1" style="left:310px">ubuntu-prod</span><span class="cell b1" style="left:410px">2</span><span class="cell b1" style="left:510px">2</span><span class="cell b1" style="left:610px">true</span></div></div>
</body></html>
